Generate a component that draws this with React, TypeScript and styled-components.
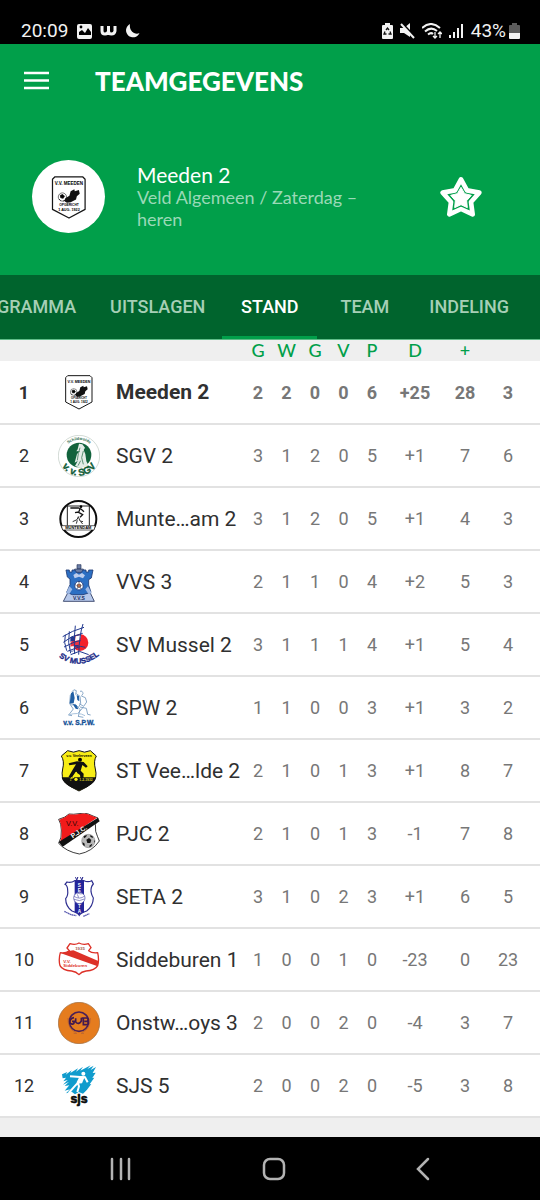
import React from "react";
import styled, { createGlobalStyle } from "styled-components";

const GlobalStyle = createGlobalStyle`
  *, *::before, *::after { box-sizing: border-box; }
  body {
    margin: 0;
    background: #efefef;
    font-family: Roboto, "Liberation Sans", sans-serif;
    color: #303030;
  }
  button { font: inherit; color: inherit; background: none; border: 0; padding: 0; cursor: pointer; }
  svg { display: block; }
`;

const Screen = styled.div`
  display: flex;
  flex-direction: column;
  min-height: 100vh;
`;

/* ---------- status bar ---------- */

const StatusBar = styled.div`
  display: flex;
  align-items: center;
  justify-content: space-between;
  height: 44px;
  padding: 18px 20px 0 21px;
  background: #000;
  color: #f2f2f2;
  font-size: 19px;
  line-height: 26px;
`;

const StatusGroup = styled.div<{ $gap: number }>`
  display: flex;
  align-items: center;
  gap: ${(p) => p.$gap}px;
`;

const Battery = styled.div`
  display: flex;
  align-items: center;
  gap: 3px;
`;

/* ---------- green header ---------- */

const Header = styled.header`
  background: #019f4a;
  color: #fff;
  font-family: Lato, "Open Sans", sans-serif;
`;

const Toolbar = styled.div`
  display: flex;
  align-items: center;
  gap: 46px;
  height: 74px;
  padding: 0 24px;
`;

const ScreenTitle = styled.h1`
  margin: 0;
  font-size: 26px;
  line-height: 32px;
  font-weight: 900;
`;

const Profile = styled.section`
  display: flex;
  align-items: center;
  gap: 32px;
  height: 157px;
  padding: 0 58px 0 32px;
`;

const Avatar = styled.div`
  display: flex;
  align-items: center;
  justify-content: center;
  flex: none;
  width: 73px;
  height: 73px;
  border-radius: 50%;
  background: #fff;
`;

const ProfileText = styled.div`
  flex: 1;
  min-width: 0;
  padding-right: 32px;
  line-height: 22px;
`;

const TeamName = styled.h2`
  margin: 0;
  font-size: 21px;
  font-weight: 400;
`;

const TeamMeta = styled.p`
  margin: 0;
  font-size: 18px;
  color: #9ad9b7;
`;

/* ---------- tabs ---------- */

const Tabs = styled.nav`
  display: flex;
  justify-content: flex-end;
  height: 65px;
  padding-right: 14px;
  overflow: hidden;
  background: #00642d;
  border-bottom: 1px solid #5fbd88;
`;

const Tab = styled.button<{ $active?: boolean }>`
  flex: none;
  min-width: 95px;
  padding: 1px 17px 0;
  font-size: 18px;
  font-weight: 500;
  color: ${(p) => (p.$active ? "#fff" : "#a6cfb6")};
  border-bottom: 3px solid ${(p) => (p.$active ? "#019f4a" : "transparent")};
`;

/* ---------- standings ---------- */

const Standings = styled.main`
  flex: 1;
  padding-bottom: 19px;
`;

const Table = styled.table`
  width: 100%;
  table-layout: fixed;
  border-collapse: collapse;
`;

const Col = styled.col<{ $w?: number }>`
  width: ${(p) => (p.$w ? `${p.$w}px` : "auto")};
`;

const ColumnHead = styled.th`
  height: 21px;
  padding: 0;
  font-family: Lato, "Open Sans", sans-serif;
  font-size: 18px;
  line-height: 21px;
  font-weight: 500;
  color: #019f4a;
`;

const TeamRow = styled.tr<{ $own?: boolean }>`
  height: 63px;
  background: #fff;
  border-bottom: 2px solid #e2e2e2;
  font-weight: ${(p) => (p.$own ? 700 : 400)};
`;

const Rank = styled.td`
  padding: 0;
  text-align: center;
  font-size: 18px;
`;

const LogoCell = styled.td`
  padding: 0 10px;
`;

const Club = styled.th`
  padding: 0 0 0 6px;
  text-align: left;
  white-space: nowrap;
  font-size: 21px;
  font-weight: inherit;
`;

const Stat = styled.td`
  padding: 0;
  text-align: center;
  font-size: 18px;
  color: #777;
`;

const SystemNav = styled.nav`
  display: flex;
  align-items: center;
  justify-content: space-around;
  height: 63px;
  padding: 0 45px;
  background: #000;
`;

/* ---------- club crests, drawn on a 126 unit square ---------- */

const crestFont = "Liberation Sans, sans-serif";

const Crest = ({ size = 42, children }: { size?: number; children: React.ReactNode }) => (
  <svg width={size} height={size} viewBox="0 0 126 126" fontFamily={crestFont} fontWeight="700" aria-hidden="true">
    {children}
  </svg>
);

const Meeden = ({ size }: { size?: number }) => (
  <Crest size={size}>
    <path d="M29 14H96L102 20V93L63 114L23 93V20Z" fill="#fff" stroke="#161616" strokeWidth="3" strokeLinejoin="round" />
    <text x="63" y="35" fontSize="11" textAnchor="middle">V.V. MEEDEN</text>
    <circle cx="47" cy="63" r="10" fill="#fff" stroke="#222" strokeWidth="1.5" />
    <path d="M42 59l6-2 4 4-3 5-6-1zM39 68l4 4M54 70l-5 3" stroke="#111" strokeWidth="2" />
    <path d="M54 66l10-6 3-11 9-5 1 5 10-3 2 9-7 6-2 8-13 7-9 1-6-4z" fill="#111" />
    <text x="63" y="85" fontSize="8" textAnchor="middle">OPGERICHT</text>
    <text x="63" y="96" fontSize="9" textAnchor="middle">1 AUG. 1922</text>
  </Crest>
);

const Sgv = () => (
  <Crest>
    <circle cx="63" cy="63" r="62" fill="#fff" stroke="#a9b8ae" strokeWidth="1.5" />
    <circle cx="63" cy="60" r="37" fill="#12633c" />
    <path d="M63 26l10 2 8 10-4 7 5 12 3 22 7 13-25 6-16-5 8-15-9 5 7-26 9-9-11 1 4-6z" fill="#e4ece7" />
    <path d="M66 38l-5 18-3 20M76 48l-5 20 5 20M60 92l8-15" stroke="#5e9276" strokeWidth="3" fill="none" />
    <path id="sgv-top" d="M27 30A50 50 0 0 1 99 30" fill="none" />
    <text fontSize="12" fill="#2e6b4b" textAnchor="middle"><textPath href="#sgv-top" startOffset="50%">Schildwolde</textPath></text>
    <path id="sgv-bottom" d="M8 86A60 60 0 0 0 118 86" fill="none" />
    <text fontSize="29" fontWeight="900" fill="#0f5c37" stroke="#0f5c37" textAnchor="middle"><textPath href="#sgv-bottom" startOffset="50%">v. v. SGV</textPath></text>
  </Crest>
);

const Muntendam = () => (
  <Crest>
    <circle cx="61" cy="63" r="54" fill="#fff" stroke="#0d0d0d" strokeWidth="6" />
    <path d="M28 83V24H94V83" fill="none" stroke="#222" strokeWidth="3" />
    <path d="M10 83H112L108 96H14Z" fill="#fff" stroke="#111" strokeWidth="2" />
    <text x="61" y="94" fontSize="12" fontWeight="900" textAnchor="middle">MUNTENDAM</text>
    <circle cx="69" cy="26" r="4" />
    <path d="M37 30h24l8 3 9 8M66 32l-4 11 12 7-8 8M62 42l-11 2" stroke="#151515" strokeWidth="4" fill="none" />
    <path d="M44 71l13-6 4-9 5 13 9 2M58 67l-3 10M68 71l6 7" stroke="#333" strokeWidth="3" fill="none" />
  </Crest>
);

const Vvs = () => (
  <Crest>
    <path d="M57 11h12v12h-12zM50 24h26v10H50z" fill="#6b7fa6" stroke="#26345c" strokeWidth="2" />
    <path d="M30 94h66l13 27H16z" fill="#b6c8ea" stroke="#26345c" strokeWidth="2.5" />
    <path d="M24 27h10v6h8v-6h9l5 8h14l5-8h9v6h8v-6h13l-5 24-8 5v16l7 22-24 7H43l-17-7 10-23V54l-8-6z" fill="#2c6fc3" stroke="#203b75" strokeWidth="2.5" />
    <path d="M46 42l9-6 8 5 9-5 9 7-6 9-12-5-13 5z" fill="#bccded" />
    <path d="M34 76l9 9-9 14-10-2zM90 76l-8 9 9 14 10-2z" fill="#9db8e4" />
    <circle cx="63" cy="74" r="13" fill="#fff" stroke="#22448c" strokeWidth="3" />
    <path d="M63 68l6 4-2 7h-8l-2-7zM63 61v5M51 71l4 2M75 71l-4 2M57 84l2-4M69 84l-2-4" fill="#b7704d" stroke="#334" strokeWidth="2" />
    <text x="63" y="116" fontSize="15" textAnchor="middle" fill="#16295a">V.V.S</text>
  </Crest>
);

const Mussel = () => (
  <Crest>
    <circle cx="66" cy="56" r="25" fill="#f3212b" />
    <path d="M37 39l16-2-3 13-13 3zM57 34h12l-3 13H53zM52 54h12l-3 14H47zM37 70h9l2 11-8 2z" fill="#24368f" />
    <path d="M38 53l12-2-2 15-11 3zM54 50l12-1-2 14H50z" fill="#ef3340" />
    <path d="M53 37l16-3-4 14-14 3zM37 68l12-2-2 14H38z" fill="#fff" />
    <path d="M75 0Q64 32 62 92M52 5Q46 45 50 90M34 22Q28 55 38 88M22 32Q16 55 26 80M14 38L44 22L78 10M16 55L42 38L74 28M18 69L52 53L68 50M28 82L68 67L82 70M38 92L64 82L92 92" fill="none" stroke="#22398f" strokeWidth="3" />
    <path id="mussel-arc" d="M-3 95Q62 146 129 90" fill="none" />
    <text fontSize="23" fontWeight="900" fill="#1a2a87" stroke="#1a2a87" textAnchor="middle"><textPath href="#mussel-arc" startOffset="50%">SV MUSSEL</textPath></text>
  </Crest>
);

const Spw = () => (
  <Crest>
    <g fill="none" stroke="#7196bd" strokeWidth="2.5" strokeLinejoin="round">
      <path d="M42 14q5-10 13-3l-2 12M44 17l-7 8-2 24 5 5 12-2 9 10M55 20l11 8 2 21-6 11" />
      <path d="M66 13q8-3 9 7l-4 6M70 27l12 5 4 13-9 13-13-8M36 52l10 14-14 18M52 53l14 14-5 21M66 60l19 4 4 18 9 2M76 60l-15 18M32 84l10 2M60 88l16 3" />
    </g>
    <path d="M39 19l7-6 4 20-3 16-12 1zM56 24l7 3 1 16-6-4zM44 51l11 3 6 13-8-2z" fill="#215fa4" />
    <path d="M31 84q30-10 50 2" stroke="#a9c3dd" strokeWidth="3" fill="none" />
    <text x="63" y="115" fontSize="20" fontWeight="900" fill="#155096" stroke="#155096" textAnchor="middle">v.v. S.P.W.</text>
  </Crest>
);

const Veelerveen = () => (
  <Crest>
    <path d="M29 2Q47 11 63 2Q79 11 97 2L115 18Q106 33 112 57Q119 83 103 99Q91 110 63 123Q35 110 23 99Q8 83 14 57Q20 33 10 18Z" fill="#f8ed16" stroke="#111" strokeWidth="3" />
    <path d="M11 82H115Q111 104 63 122Q14 104 11 82Z" fill="#111" />
    <text x="63" y="20" fontSize="11" textAnchor="middle">v.v. Veelerveen</text>
    <circle cx="66" cy="29" r="6" />
    <path d="M32 40l25-6 20 2 12 13-5 4-11-8-5 17 9 9-1 19h-8l-2-15-13-9-12 17-10-1 13-23 10-16-20 3z" fill="#111" />
    <path d="M56 66l-11 18M43 86l-3-4" stroke="#f8ed16" strokeWidth="4" />
    <circle cx="54" cy="88" r="5" fill="#f8ed16" />
    <text x="35" y="92" fontSize="9" fill="#d9cf28">1</text>
    <text x="64" y="92" fontSize="10" fill="#d9cf28">1-2-1932</text>
  </Crest>
);

const Pjc = () => (
  <Crest>
    <path d="M33 3Q46 5 63 2Q80 -2 91 3Q105 9 120 15Q108 33 113 55Q118 70 124 84Q102 116 64 123Q25 116 2 91Q12 74 10 51Q10 32 2 19Q22 14 33 3Z" fill="#fff" stroke="#151515" strokeWidth="2.5" />
    <path d="M33 4Q46 6 63 3Q80-1 91 4Q103 9 117 14L6 89Q13 70 11 50Q10 32 4 20Q22 15 33 4Z" fill="#f21b1b" />
    <path d="M120 14L125 25L14 101L2 87Z" fill="#111" />
    <text x="24" y="39" fontSize="22" fontWeight="400" fill="#2c0505">V.V.</text>
    <text x="62" y="63" fontSize="20" fontWeight="900" fill="#fff" textAnchor="middle" transform="rotate(-34 62 55)">P.J.C.</text>
    <circle cx="91" cy="84" r="20" fill="#b8b8b8" stroke="#777" strokeWidth="1.5" />
    <path d="M85 80l8-5 7 6-3 9h-9zM77 69l10-3-3 6-6 4zM97 66l8 5-1 4-7-4zM73 88l6 3 2 8-6-3zM95 97l8-5-3 8-6 3zM108 81l3 4-2 5z" fill="#151515" />
  </Crest>
);

const Seta = () => (
  <Crest>
    <path d="M27 18Q40 21 50 14H78Q90 20 101 14L106 24Q98 32 99 47Q101 59 106 66Q105 91 86 105Q68 111 64 118Q59 111 42 105Q23 91 23 68Q31 58 29 43Q29 29 21 25Z" fill="#fff" stroke="#2c2d8f" strokeWidth="3.5" />
    <path d="M50 14H78V109Q68 111 64 116Q60 111 50 109Z" fill="#23249a" />
    <g fill="#fff" fontSize="14" textAnchor="middle">
      <text x="64" y="32">S</text><text x="64" y="47">E</text><text x="64" y="96">T</text><text x="64" y="110">A</text>
    </g>
    <circle cx="64" cy="66" r="17" fill="#fff" stroke="#4a4ba5" strokeWidth="2" />
    <path d="M48 61q17 11 32-1M48 70q17 8 31-1M57 51q10 4 18 2M58 55l4 10" fill="none" stroke="#5556aa" strokeWidth="2" />
    <path d="M52 3l4 9 3-9M60 3l-4 9M67 3l4 9 3-9M75 3l-4 9" stroke="#2c2d8f" strokeWidth="2.5" fill="none" />
    <path d="M19 106l20 10 16 3M76 121l18-8" stroke="#5a5bb0" strokeWidth="4" strokeDasharray="5 1" fill="none" />
  </Crest>
);

const Siddeburen = () => (
  <Crest>
    <path d="M36 14Q52 19 63 12Q76 19 91 14L99 26L92 35Q101 43 119 41Q124 63 119 80Q111 95 84 96Q70 98 63 107Q55 98 41 96Q14 95 6 80Q1 62 7 41Q24 43 34 35L27 27Z" fill="#fff" stroke="#dd3128" strokeWidth="4" strokeLinejoin="round" />
    <path d="M32 36L46 34L121 66L119 82L9 43Q22 43 32 36Z" fill="#dd3128" />
    <text x="66" y="33" fontSize="13" textAnchor="middle" fill="#a85b50">1935</text>
    <text x="16" y="71" fontSize="13" fill="#dd3128">V.V.</text>
    <text x="16" y="84" fontSize="13" fill="#dd3128">Siddeburen</text>
  </Crest>
);

const Onstwedder = () => (
  <Crest>
    <circle cx="63" cy="63" r="62" fill="#e57c1e" stroke="#9b693d" strokeWidth="2" />
    <circle cx="63" cy="59" r="29" fill="none" stroke="#4a2057" strokeWidth="5" />
    <path d="M30 48Q29 81 53 91M97 48Q97 80 73 91M47 94h10M69 94h9" fill="none" stroke="#a65a3b" strokeWidth="2" />
    <path d="M48 47Q34 49 36 64Q48 71 49 58H42M53 49V60Q62 70 70 57V47M76 48V68H87Q95 64 88 58H79H87Q94 52 87 48H71" fill="none" stroke="#43194f" strokeWidth="5" />
  </Crest>
);

const Sjs = () => (
  <Crest>
    <path d="M12 28l16-7-5 8 18-13-4 8 23-14-6 10 21-15-8 12L98 1l-10 11 19-10-9 13 16-9-10 18 9-1-10 16 6-1-14 20 5-1-13 17-12 12-13-5-11 7-10-8-17 5 12-12-16 4 14-16-14 2 12-12-17 8 14-14-13 4 8-11-10 2z" fill="#109ccd" />
    <circle cx="76" cy="26" r="6" fill="#fff" />
    <path d="M36 34l30 2 15 1 8 15M67 37l-8 15 4 12-5 17M60 53l-13 14-15 17" fill="none" stroke="#fff" strokeWidth="6" />
    <path d="M65 34h16l-9 21-14 1z" fill="#fff" />
    <text x="63" y="115" fontSize="37" fontWeight="900" fill="#0a0a0a" stroke="#0a0a0a" strokeWidth="2" textAnchor="middle">sjs</text>
  </Crest>
);

/* ---------- data ---------- */

const columns = ["G", "W", "G", "V", "P", "D", "+", ""];

const teams = [
  { name: "Meeden 2", logo: <Meeden />, stats: ["2", "2", "0", "0", "6", "+25", "28", "3"], own: true },
  { name: "SGV 2", logo: <Sgv />, stats: ["3", "1", "2", "0", "5", "+1", "7", "6"] },
  { name: "Munte…am 2", logo: <Muntendam />, stats: ["3", "1", "2", "0", "5", "+1", "4", "3"] },
  { name: "VVS 3", logo: <Vvs />, stats: ["2", "1", "1", "0", "4", "+2", "5", "3"] },
  { name: "SV Mussel 2", logo: <Mussel />, stats: ["3", "1", "1", "1", "4", "+1", "5", "4"] },
  { name: "SPW 2", logo: <Spw />, stats: ["1", "1", "0", "0", "3", "+1", "3", "2"] },
  { name: "ST Vee…lde 2", logo: <Veelerveen />, stats: ["2", "1", "0", "1", "3", "+1", "8", "7"] },
  { name: "PJC 2", logo: <Pjc />, stats: ["2", "1", "0", "1", "3", "-1", "7", "8"] },
  { name: "SETA 2", logo: <Seta />, stats: ["3", "1", "0", "2", "3", "+1", "6", "5"] },
  { name: "Siddeburen 1", logo: <Siddeburen />, stats: ["1", "0", "0", "1", "0", "-23", "0", "23"] },
  { name: "Onstw…oys 3", logo: <Onstwedder />, stats: ["2", "0", "0", "2", "0", "-4", "3", "7"] },
  { name: "SJS 5", logo: <Sjs />, stats: ["2", "0", "0", "2", "0", "-5", "3", "8"] },
];

const tabs = ["PROGRAMMA", "UITSLAGEN", "STAND", "TEAM", "INDELING"];

export default function App() {
  return (
    <Screen>
      <GlobalStyle />
      <StatusBar>
        <StatusGroup $gap={8}>
          <span>20:09</span>
          <svg width="16" height="16" viewBox="0 0 16 16">
            <rect x="1" y="1" width="15" height="15" rx="2" fill="#f2f2f2" />
            <path d="M3 12V9l3-2 3 3 3-5 3 4v3z" fill="#000" />
            <circle cx="5" cy="4" r="1.4" fill="#000" />
          </svg>
          <svg width="17" height="16" viewBox="0 0 17 16">
            <path d="M2 3v5q0 3 3 3t3.500-3V3M8.500 8q0 3 3 3t3.500-3V3" fill="none" stroke="#f2f2f2" strokeWidth="3" />
          </svg>
          <svg width="15" height="16" viewBox="0 0 15 16">
            <path d="M5 1A7 7 0 1 0 14.500 10Q12 11.500 9 10Q4 7 5 1Z" fill="#f2f2f2" />
          </svg>
        </StatusGroup>
        <StatusGroup $gap={7}>
          <svg width="11" height="16" viewBox="0 0 11 16">
            <path d="M3 0h5v2h2q1 0 1 1v12q0 1-1 1H1q-1 0-1-1V3q0-1 1-1h2z" fill="#f2f2f2" />
            <path d="M4 7l1.500-2L7 7M8 8.500L9 11H6.500M4.500 11H2L3 8.500" fill="none" stroke="#111" strokeWidth="1.300" />
          </svg>
          <svg width="15" height="16" viewBox="0 0 15 16">
            <path d="M0 5h4l6-5v14l-6-4H0z" fill="#f2f2f2" />
            <path d="M2 0L15 14" stroke="#000" strokeWidth="2" />
            <path d="M1 1L14 15" stroke="#f2f2f2" strokeWidth="2" />
          </svg>
          <svg width="20" height="16" viewBox="0 0 20 16" fill="none" stroke="#f2f2f2" strokeWidth="2">
            <path d="M0 5Q9-3 18 5M3 8.500Q9 3 15 8M6 11.500Q9 9 11 11" />
            <path d="M13 9v6M11 13l2 2 2-2M18 15V9M16 11l2-2 2 2" strokeWidth="1.300" />
          </svg>
          <svg width="15" height="16" viewBox="0 0 15 16" fill="#f2f2f2">
            <path d="M0 12h2v3H0zM4 9h2v6H4zM8 5h2v10H8zM12 1h2v14h-2z" />
          </svg>
          <Battery>
            <span>43%</span>
            <svg width="11" height="16" viewBox="0 0 11 16">
              <path d="M3 0h5v2h2q1 0 1 1v7H0V3q0-1 1-1h2z" fill="#5c5c5c" />
              <path d="M0 10h11v5q0 1-1 1H1q-1 0-1-1z" fill="#f2f2f2" />
            </svg>
          </Battery>
        </StatusGroup>
      </StatusBar>

      <Header>
        <Toolbar>
          <button aria-label="Menu">
            <svg width="25" height="20" viewBox="0 0 25 20">
              <path d="M0 2H25M0 9.500H25M0 17H25" stroke="#fff" strokeWidth="2.500" />
            </svg>
          </button>
          <ScreenTitle>TEAMGEGEVENS</ScreenTitle>
        </Toolbar>
        <Profile>
          <Avatar><Meeden size={52} /></Avatar>
          <ProfileText>
            <TeamName>Meeden 2</TeamName>
            <TeamMeta>Veld Algemeen / Zaterdag – heren</TeamMeta>
          </ProfileText>
          <button aria-label="Favoriet">
            <svg width="42" height="42" viewBox="0 0 126 126" stroke="#fff" strokeLinejoin="round">
              <path d="M63 10L81 43L118 50L93 78L98 115L63 99L28 115L33 78L8 50L45 43Z" fill="none" strokeWidth="14" />
              <path d="M63 34L74 53L94 58L80 74L82 95L63 86L44 95L46 74L32 58L52 53Z" fill="#fff" strokeWidth="3" />
            </svg>
          </button>
        </Profile>
      </Header>

      <Tabs aria-label="Teamgegevens">
        {tabs.map((t) => (
          <Tab key={t} $active={t === "STAND"} aria-current={t === "STAND" ? "page" : undefined}>{t}</Tab>
        ))}
      </Tabs>

      <Standings>
        <Table>
          <colgroup>
            <Col $w={48} /><Col $w={62} /><Col />
            <Col $w={28} /><Col $w={29} /><Col $w={28} /><Col $w={29} /><Col $w={28} />
            <Col $w={58} /><Col $w={42} /><Col $w={44} /><Col $w={10} />
          </colgroup>
          <thead>
            <tr>
              <td colSpan={3} />
              {columns.map((c, i) => <ColumnHead key={i} scope="col">{c}</ColumnHead>)}
              <td />
            </tr>
          </thead>
          <tbody>
            {teams.map((team, i) => (
              <TeamRow key={team.name} $own={team.own}>
                <Rank>{i + 1}</Rank>
                <LogoCell>{team.logo}</LogoCell>
                <Club scope="row">{team.name}</Club>
                {team.stats.map((s, j) => <Stat key={j}>{s}</Stat>)}
                <td />
              </TeamRow>
            ))}
          </tbody>
        </Table>
      </Standings>

      <SystemNav aria-label="Systeem">
        <button aria-label="Recente apps">
          <svg width="22" height="24" viewBox="0 0 22 24">
            <path d="M2 2V22M11 2V22M19 2V22" stroke="#b3b3b3" strokeWidth="2.500" strokeLinecap="round" />
          </svg>
        </button>
        <button aria-label="Startscherm">
          <svg width="24" height="24" viewBox="0 0 24 24">
            <rect x="2" y="2" width="20" height="20" rx="6" fill="none" stroke="#b3b3b3" strokeWidth="2.500" />
          </svg>
        </button>
        <button aria-label="Terug">
          <svg width="14" height="24" viewBox="0 0 14 24">
            <path d="M12 2L2 12L12 22" fill="none" stroke="#b3b3b3" strokeWidth="2.500" strokeLinecap="round" />
          </svg>
        </button>
      </SystemNav>
    </Screen>
  );
}
